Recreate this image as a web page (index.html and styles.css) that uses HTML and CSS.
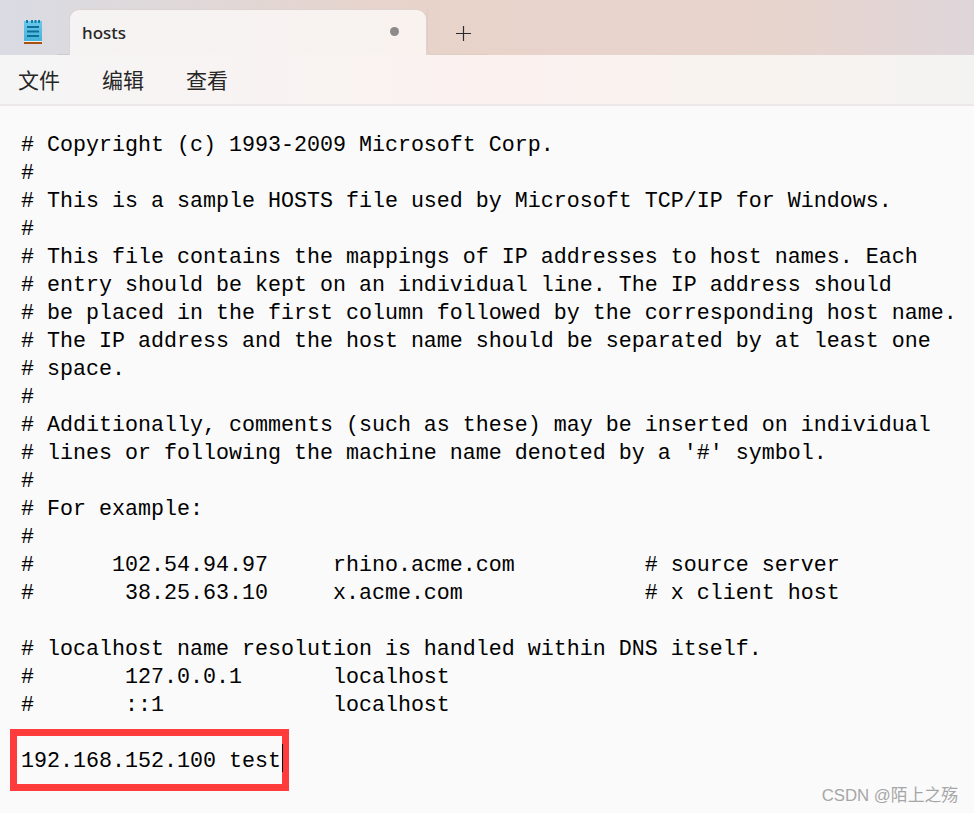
FILE: index.html
```
<!DOCTYPE html>
<html lang="zh">
<head>
<meta charset="utf-8">
<title>hosts</title>
<link rel="stylesheet" href="styles.css">
</head>
<body>
<div class="window">
  <header class="tabbar">
    <div class="app-icon">
      <svg width="18" height="24" viewBox="0 0 18 24">
        <defs><linearGradient id="pad" x1="0" y1="0" x2="0" y2="1"><stop offset="0" stop-color="#6cc8ea"/><stop offset="1" stop-color="#45b2d8"/></linearGradient></defs>
        <rect x="0" y="1" width="18" height="20" fill="url(#pad)"/>
        <rect x="0" y="21" width="18" height="1" fill="#f2efe9"/>
        <rect x="0" y="22" width="18" height="2" fill="#a9500f"/>
        <path d="M2 0h2v3H2zM7 0h2v3H7zM10.500 0h2v3h-2zM14 0h2v3h-2z" fill="#0f7fa8"/>
        <path d="M3 6h12v2H3zM3 10.500h12v2H3zM3 15h12v2H3z" fill="#0b6f99"/>
      </svg>
    </div>
    <div class="tab">
      <span class="tab-title">hosts</span>
      <span class="tab-dot"></span>
    </div>
    <div class="new-tab">
      <svg width="15" height="15" viewBox="0 0 15 15"><path d="M7.500 0v15M0 7.500h15" stroke="#2b2b2b" stroke-width="1.200" fill="none"/></svg>
    </div>
  </header>
  <nav class="menubar">
    <span class="menu-item">文件</span>
    <span class="menu-item">编辑</span>
    <span class="menu-item">查看</span>
  </nav>
  <main class="editor">
<pre class="text"># Copyright (c) 1993-2009 Microsoft Corp.
#
# This is a sample HOSTS file used by Microsoft TCP/IP for Windows.
#
# This file contains the mappings of IP addresses to host names. Each
# entry should be kept on an individual line. The IP address should
# be placed in the first column followed by the corresponding host name.
# The IP address and the host name should be separated by at least one
# space.
#
# Additionally, comments (such as these) may be inserted on individual
# lines or following the machine name denoted by a '#' symbol.
#
# For example:
#
#      102.54.94.97     rhino.acme.com          # source server
#       38.25.63.10     x.acme.com              # x client host

# localhost name resolution is handled within DNS itself.
#       127.0.0.1       localhost
#       ::1             localhost

<span class="highlight">192.168.152.100 test<span class="caret"></span></span></pre>
  </main>
  <div class="watermark">CSDN @陌上之殇</div>
</div>
</body>
</html>
```
FILE: styles.css
```
html, body {
  margin: 0;
  padding: 0;
  background: #fafafa;
}
.window {
  position: relative;
  width: 974px;
  height: 813px;
  overflow: hidden;
  display: flex;
  flex-direction: column;
  background: #fafafa;
}
.tabbar {
  height: 55px;
  flex: none;
  box-sizing: border-box;
  padding-top: 9px;
  display: flex;
  background: linear-gradient(90deg, #d9dbe3 0%, #e0d8d8 20%, #e8d3ca 42%, #e7d4cd 80%, #dfd6da 100%);
}
.app-icon {
  width: 69px;
  flex: none;
  box-sizing: border-box;
  padding: 11px 27px 0 24px;
  position: relative;
}
.app-icon::after {
  content: "";
  position: absolute;
  right: 0;
  bottom: 0;
  width: 12px;
  height: 1px;
  background: #cfcbcd;
}
.tab {
  width: 358px;
  flex: none;
  box-sizing: border-box;
  background: linear-gradient(90deg, #f5f3f3 0%, #f9f2ef 100%);
  border: 1px solid #ddd3d0;
  border-bottom: 0;
  border-radius: 10px 10px 0 0;
  display: flex;
  align-items: center;
  justify-content: space-between;
  padding: 0 27px 0 12px;
}
.tab-title {
  font: 500 17px "Noto Sans", "Open Sans", sans-serif;
  color: #262626;
}
.tab-dot {
  width: 9px;
  height: 9px;
  border-radius: 50%;
  margin-bottom: 2px;
  background: #8c8a8a;
}
.new-tab {
  width: 61px;
  flex: none;
  box-sizing: border-box;
  display: flex;
  justify-content: center;
  padding: 17px 0 0 10px;
  border-left: 1px solid #dfcdc5;
  border-bottom: 1px solid #dfcdc5;
  border-bottom-left-radius: 6px;
}
.menubar {
  height: 51px;
  flex: none;
  box-sizing: border-box;
  display: flex;
  gap: 42px;
  align-items: center;
  padding: 0 18px 2px;
  background: linear-gradient(90deg, #f5f5f5 0%, #fbf2f0 50%, #f8f3ef 80%, #f3f3f2 100%);
  border-bottom: 2px solid #ebe8e7;
}
.menu-item {
  font: 400 21px "Noto Sans CJK SC", sans-serif;
  color: #262626;
}
.editor {
  flex: 1;
  padding: 26px 0 0 21px;
  background: #fafafa;
}
.text {
  margin: 0;
  font: 400 21.67px/28px "Liberation Mono", monospace;
  color: #000;
  white-space: pre;
}
.highlight {
  position: relative;
}
.highlight::before {
  content: "";
  position: absolute;
  left: -11px;
  right: -8px;
  top: -20px;
  bottom: -17px;
  border: 7px solid #ff3b3b;
}
.caret {
  position: absolute;
  right: -2px;
  top: -5px;
  width: 1px;
  height: 28px;
  background: #000;
}
.watermark {
  position: absolute;
  right: 16px;
  bottom: 7px;
  font: 400 16.800px "Liberation Sans", "Noto Sans CJK SC", sans-serif;
  color: #a6a6a6;
}
```
